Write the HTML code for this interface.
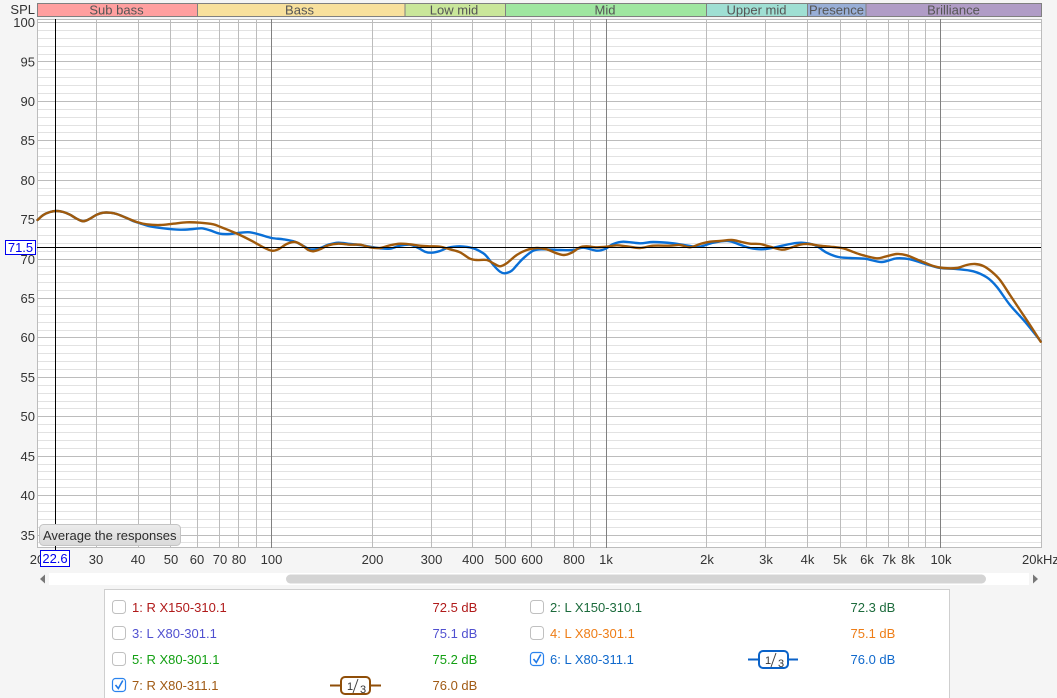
<!DOCTYPE html>
<html><head><meta charset="utf-8">
<style>
html,body{margin:0;padding:0;background:#f5f5f5;width:1057px;height:698px;overflow:hidden}
svg{display:block}
text{font-family:"Liberation Sans",sans-serif;font-size:13px}
.ax{fill:#333}
.bd{fill:#555;text-anchor:middle}
.e{text-anchor:end}
.m{text-anchor:middle}
</style></head><body>
<svg width="1057" height="698" viewBox="0 0 1057 698" xmlns="http://www.w3.org/2000/svg">
<rect width="1057" height="698" fill="#f5f5f5"/>
<!-- band bar -->
<g stroke="#808080" stroke-width="1">
<rect x="37.5" y="3.5" width="160" height="13" fill="#ff9f9f"/>
<rect x="197.5" y="3.5" width="207.5" height="13" fill="#f8e09c"/>
<rect x="405" y="3.5" width="100.5" height="13" fill="#c9e69a"/>
<rect x="505.5" y="3.5" width="201" height="13" fill="#9fe6a0"/>
<rect x="706.5" y="3.5" width="101" height="13" fill="#9fdfd3"/>
<rect x="807.5" y="3.5" width="58.5" height="13" fill="#98aed6"/>
<rect x="866" y="3.5" width="175.5" height="13" fill="#b09cc6"/>
</g>
<text class="bd" x="116.5" y="14.5">Sub bass</text>
<text class="bd" x="299.5" y="14.5">Bass</text>
<text class="bd" x="454" y="14.5">Low mid</text>
<text class="bd" x="605" y="14.5">Mid</text>
<text class="bd" x="756.5" y="14.5">Upper mid</text>
<text class="bd" x="836.5" y="14.5">Presence</text>
<text class="bd" x="953.5" y="14.5">Brilliance</text>
<text class="ax e" x="35" y="14">SPL</text>
<!-- plot -->
<rect x="37.5" y="19.5" width="1004" height="528" fill="#fff"/>
<path stroke="#e2e2e2" stroke-width="1" fill="none" d="M38 30.5H1041M38 38.5H1041M38 46.5H1041M38 54.5H1041M38 69.5H1041M38 77.5H1041M38 85.5H1041M38 93.5H1041M38 109.5H1041M38 117.5H1041M38 125.5H1041M38 132.5H1041M38 148.5H1041M38 156.5H1041M38 164.5H1041M38 172.5H1041M38 188.5H1041M38 195.5H1041M38 203.5H1041M38 211.5H1041M38 227.5H1041M38 235.5H1041M38 243.5H1041M38 251.5H1041M38 266.5H1041M38 274.5H1041M38 282.5H1041M38 290.5H1041M38 306.5H1041M38 314.5H1041M38 322.5H1041M38 330.5H1041M38 345.5H1041M38 353.5H1041M38 361.5H1041M38 369.5H1041M38 385.5H1041M38 393.5H1041M38 401.5H1041M38 408.5H1041M38 424.5H1041M38 432.5H1041M38 440.5H1041M38 448.5H1041M38 464.5H1041M38 471.5H1041M38 479.5H1041M38 487.5H1041M38 503.5H1041M38 511.5H1041M38 519.5H1041M38 527.5H1041M38 542.5H1041"/>
<path stroke="#bcbcbc" stroke-width="1" fill="none" d="M38 19.5H1041M38 22.5H1041M38 61.5H1041M38 101.5H1041M38 140.5H1041M38 180.5H1041M38 219.5H1041M38 259.5H1041M38 298.5H1041M38 337.5H1041M38 377.5H1041M38 416.5H1041M38 456.5H1041M38 495.5H1041M38 535.5H1041M38 547.5H1041"/>
<path stroke="#bcbcbc" stroke-width="1" fill="none" d="M37.5 19V548M96.5 19V548M138.5 19V548M170.5 19V548M197.5 19V548M219.5 19V548M238.5 19V548M256.5 19V548M372.5 19V548M431.5 19V548M472.5 19V548M505.5 19V548M531.5 19V548M554.5 19V548M573.5 19V548M590.5 19V548M706.5 19V548M765.5 19V548M807.5 19V548M840.5 19V548M866.5 19V548M888.5 19V548M908.5 19V548M925.5 19V548M1041.5 19V548"/>
<path stroke="#808080" stroke-width="1" fill="none" d="M271.5 19V548M606.5 19V548M940.5 19V548"/>
<!-- curves -->
<polyline class="cv" fill="none" stroke="#0a6fd6" stroke-width="2.4" stroke-linejoin="round" stroke-linecap="round" points="37.5,220 43.3,215 50,212 56.7,211 63.3,212 70,214.7 76.7,218.7 83.3,221.3 90,218.7 96.7,214.7 103.3,212.7 110,212.7 116.7,214 126.7,218 133,221 140,223.3 150,226.3 163.3,228.3 180,229.7 193.3,229 201.7,228.3 210,230.3 220,233.7 230,234 240,232.7 250,232.3 260,234.7 271.7,238 283.3,239.3 295,241.7 303.3,246 310,249.3 318.3,248.7 328.3,244.7 338.3,242.7 350,244 360,245 370,246.7 380,248.3 390,248.7 400,245.7 410,244.7 418.3,248 425,251.7 431.7,252.7 440,251 448.3,247.7 460,246.3 473.3,248.3 483.3,253.3 488,258 493.3,265 500,271.7 505,273.3 511.7,270.7 517,265 523.3,258.3 533.3,250.7 543.3,249.3 560,250 573.3,250 583.3,247.7 596.7,250.7 605,249 613.3,244 623.3,241.7 640,243.3 653.3,242 673.3,243.3 690,246 700,246.7 713.3,242.7 728.3,241 740,244.7 750,248 761.7,249.3 775,247.3 790,244 801.7,242.7 815,245.3 826.7,252.7 838.3,257 850,258 865,258.7 881.7,262 896.7,258.3 910,259.3 923.3,263.3 940,268 956.7,269 973.3,271.3 986.7,277.3 996.7,286.7 1010,305 1025,321.7 1040.5,341"/>
<polyline class="cv" fill="none" stroke="#a05a0c" stroke-width="2.4" stroke-linejoin="round" stroke-linecap="round" points="37.5,220 43.3,215 50,212 56.7,211 63.3,212 70,214.7 76.7,218.7 83.3,221.3 90,218.7 96.7,214.7 103.3,212.7 110,212.7 116.7,214 126.7,218 136.7,222 146.7,224.3 160,225 173.3,223.7 186.7,222.3 200,222.7 213.3,224.3 220,226.7 230,230.7 240,235 253.3,241.7 263.3,247.3 271.7,250.7 278.3,249.3 286.7,244 295,242 301.7,245 308.3,250 313.3,251.3 320,249.3 328.3,245.3 338.3,243.7 350,244.7 360,244.7 370,247.3 380,248 390,245.3 400,243.7 410,244.3 420,245.7 430,246.3 440,246.7 450,249.3 460,252.3 470,258.7 476.7,260 486.7,260 493.3,263.3 500,266.3 506.7,263.3 516.7,255 526.7,250 536.7,248 546.7,249.3 556.7,253.3 564,255 571.7,252.7 580,247.3 586.7,246.3 596.7,247.3 606.7,246.7 616.7,245.3 626.7,246.3 640,248 653.3,245.7 670,245.7 680,245 690,247.3 700,244 710,241.7 720,241 731.7,240 741.7,242 750,243.7 760,244 770,246.7 781.7,249.7 790,248 800,244.7 808.3,244 820,245.7 833.3,247 843.3,248.3 853.3,252 863.3,255.3 876.7,258.3 885,256.7 896.7,254 906.7,255.3 920,260.7 933.3,266 943.3,268 956.7,268 966.7,265 975,264 983.3,266 991.7,271.7 1000,280 1010,295 1020,310 1030,325 1040.7,341.7"/>
<!-- cursors -->
<path stroke="#000" stroke-width="1" fill="none" d="M55.5 19V550M37 247.5H1041"/>
<!-- y labels -->
<text class="ax e" x="35" y="27">100</text>
<text class="ax e" x="35" y="66.5">95</text>
<text class="ax e" x="35" y="106">90</text>
<text class="ax e" x="35" y="145">85</text>
<text class="ax e" x="35" y="185">80</text>
<text class="ax e" x="35" y="224">75</text>
<text class="ax e" x="35" y="264">70</text>
<text class="ax e" x="35" y="303">65</text>
<text class="ax e" x="35" y="342">60</text>
<text class="ax e" x="35" y="382">55</text>
<text class="ax e" x="35" y="421">50</text>
<text class="ax e" x="35" y="461">45</text>
<text class="ax e" x="35" y="500">40</text>
<text class="ax e" x="35" y="540">35</text>
<!-- 71.5 box -->
<rect x="5.5" y="240.5" width="30" height="14" fill="#fff" stroke="#0000ee"/>
<text x="20.5" y="252" class="m" fill="#0000ee">71.5</text>
<!-- x labels -->
<text class="ax m" x="37" y="564">20</text>
<text class="ax m" x="96" y="564">30</text>
<text class="ax m" x="138" y="564">40</text>
<text class="ax m" x="171" y="564">50</text>
<text class="ax m" x="197" y="564">60</text>
<text class="ax m" x="220" y="564">70</text>
<text class="ax m" x="239" y="564">80</text>
<text class="ax m" x="271.5" y="564">100</text>
<text class="ax m" x="372.5" y="564">200</text>
<text class="ax m" x="431.5" y="564">300</text>
<text class="ax m" x="473" y="564">400</text>
<text class="ax m" x="505.5" y="564">500</text>
<text class="ax m" x="532" y="564">600</text>
<text class="ax m" x="574" y="564">800</text>
<text class="ax m" x="606" y="564">1k</text>
<text class="ax m" x="707" y="564">2k</text>
<text class="ax m" x="766" y="564">3k</text>
<text class="ax m" x="807.5" y="564">4k</text>
<text class="ax m" x="840" y="564">5k</text>
<text class="ax m" x="867" y="564">6k</text>
<text class="ax m" x="889" y="564">7k</text>
<text class="ax m" x="908" y="564">8k</text>
<text class="ax m" x="941" y="564">10k</text>
<text class="ax" x="1022" y="564">20kHz</text>
<!-- 22.6 box -->
<rect x="40.5" y="550.5" width="29" height="16" fill="#fff" stroke="#0000ee"/>
<text x="55" y="563" class="m" fill="#0000ee">22.6</text>
<!-- button -->
<defs><linearGradient id="b" x1="0" y1="0" x2="0" y2="1"><stop offset="0" stop-color="#ececec"/><stop offset="1" stop-color="#d9d9d9"/></linearGradient></defs>
<rect x="39.5" y="524.5" width="141" height="21" rx="4" fill="url(#b)" stroke="#c4c4c4"/>
<text x="43" y="540" fill="#2c2c2c">Average the responses</text>
<!-- scrollbar -->
<rect x="49" y="573" width="980" height="12" fill="#fff"/>
<rect x="286" y="574.5" width="700" height="9" rx="4.5" fill="#d4d4d4"/>
<path d="M45 574.5V583.5L40 579Z" fill="#777"/>
<path d="M1033 574.5V583.5L1038 579Z" fill="#777"/>
<!-- legend -->
<rect x="104.5" y="589.5" width="845" height="112" fill="#fff" stroke="#cfcfcf"/>
<g fill="#fff" stroke="#c0c0c0">
<rect x="112.5" y="600.5" width="13" height="13" rx="3"/>
<rect x="112.5" y="626.5" width="13" height="13" rx="3"/>
<rect x="112.5" y="652.5" width="13" height="13" rx="3"/>
<rect x="530.5" y="600.5" width="13" height="13" rx="3"/>
<rect x="530.5" y="626.5" width="13" height="13" rx="3"/>
</g>
<g fill="#fff" stroke="#2a83ee" stroke-width="1.2">
<rect x="112.5" y="678.5" width="13" height="13" rx="3"/>
<rect x="530.5" y="652.5" width="13" height="13" rx="3"/>
</g>
<path d="M115.5 685L118.3 688.5L122.8 680.5" fill="none" stroke="#1f78e6" stroke-width="1.6"/>
<path d="M533.5 659L536.3 662.5L540.8 654.5" fill="none" stroke="#1f78e6" stroke-width="1.6"/>
<text x="132" y="612" fill="#b01a1a">1: R X150-310.1</text>
<text x="432.5" y="612" fill="#b01a1a">72.5 dB</text>
<text x="132" y="638" fill="#5050d0">3: L X80-301.1</text>
<text x="432.5" y="638" fill="#5050d0">75.1 dB</text>
<text x="132" y="664" fill="#13a013">5: R X80-301.1</text>
<text x="432.5" y="664" fill="#13a013">75.2 dB</text>
<text x="132" y="690" fill="#a05a14">7: R X80-311.1</text>
<text x="432.5" y="690" fill="#a05a14">76.0 dB</text>
<text x="550" y="612" fill="#1c6b3c">2: L X150-310.1</text>
<text x="850.5" y="612" fill="#1c6b3c">72.3 dB</text>
<text x="550" y="638" fill="#ee7d16">4: L X80-301.1</text>
<text x="850.5" y="638" fill="#ee7d16">75.1 dB</text>
<text x="550" y="664" fill="#1069cc">6: L X80-311.1</text>
<text x="850.5" y="664" fill="#1069cc">76.0 dB</text>
<!-- filter icons -->
<g fill="none" stroke="#0a62c8" stroke-width="2">
<path d="M748 659.5H759M788 659.5H798"/>
<rect x="759" y="651" width="29" height="17" rx="4" fill="#fff"/>
</g>
<g fill="none" stroke="#8f4e08" stroke-width="2">
<path d="M330 685.5H341M370 685.5H381"/>
<rect x="341" y="677" width="29" height="17" rx="4" fill="#fff"/>
</g>
<text x="765" y="664" fill="#333" style="font-size:11px">1</text>
<text x="778" y="667" fill="#333" style="font-size:11px">3</text>
<text x="347" y="690" fill="#333" style="font-size:11px">1</text>
<text x="360" y="693" fill="#333" style="font-size:11px">3</text>
<path d="M776 653L771 667M358 679L353 693" stroke="#444" stroke-width="1" fill="none"/>
</svg>
<script>
document.querySelectorAll('polyline.cv').forEach(function(el){
  var p=el.getAttribute('points').trim().split(/\s+/).map(function(s){return s.split(',').map(Number)});
  var d='M'+p[0][0]+' '+p[0][1];
  for(var i=0;i<p.length-1;i++){
    var a=p[Math.max(i-1,0)],b=p[i],c=p[i+1],e=p[Math.min(i+2,p.length-1)];
    d+='C'+(b[0]+(c[0]-a[0])/6).toFixed(2)+' '+(b[1]+(c[1]-a[1])/6).toFixed(2)+' '+(c[0]-(e[0]-b[0])/6).toFixed(2)+' '+(c[1]-(e[1]-b[1])/6).toFixed(2)+' '+c[0]+' '+c[1];
  }
  var n=document.createElementNS('http://www.w3.org/2000/svg','path');
  n.setAttribute('d',d);
  ['fill','stroke','stroke-width','stroke-linejoin','stroke-linecap'].forEach(function(k){n.setAttribute(k,el.getAttribute(k))});
  el.parentNode.replaceChild(n,el);
});
</script>
</body></html>
